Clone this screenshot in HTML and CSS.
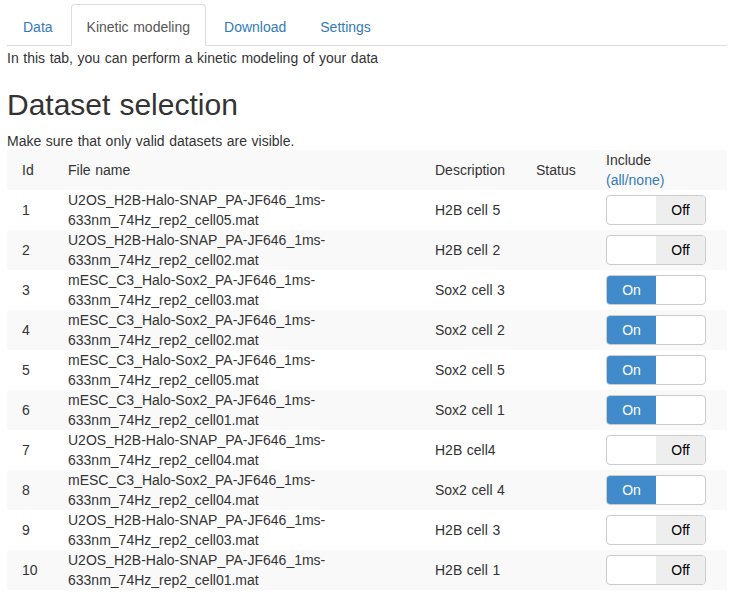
FILE: index.html
```html
<!DOCTYPE html>
<html>
<head>
<meta charset="utf-8">
<link rel="stylesheet" href="styles.css">
</head>
<body>
<div class="page">
  <ul class="tabs">
    <li><a href="#">Data</a></li>
    <li class="active"><a href="#">Kinetic modeling</a></li>
    <li><a href="#">Download</a></li>
    <li><a href="#">Settings</a></li>
  </ul>
  <div class="intro">In this tab, you can perform a kinetic modeling of your data</div>
  <h2 class="title">Dataset selection</h2>
  <div class="note">Make sure that only valid datasets are visible.</div>
  <table class="grid">
    <colgroup>
      <col class="c-id"><col class="c-file"><col class="c-desc"><col class="c-status"><col class="c-inc">
    </colgroup>
    <thead>
      <tr><th>Id</th><th>File name</th><th>Description</th><th>Status</th><th>Include<br><a href="#" class="link">(all/none)</a></th></tr>
    </thead>
    <tbody>
      <tr><td>1</td><td>U2OS_H2B-Halo-SNAP_PA-JF646_1ms-<br>633nm_74Hz_rep2_cell05.mat</td><td>H2B cell 5</td><td></td><td><div class="sw off"><span class="on-part"></span><span class="off-part">Off</span></div></td></tr>
      <tr><td>2</td><td>U2OS_H2B-Halo-SNAP_PA-JF646_1ms-<br>633nm_74Hz_rep2_cell02.mat</td><td>H2B cell 2</td><td></td><td><div class="sw off"><span class="on-part"></span><span class="off-part">Off</span></div></td></tr>
      <tr><td>3</td><td>mESC_C3_Halo-Sox2_PA-JF646_1ms-<br>633nm_74Hz_rep2_cell03.mat</td><td>Sox2 cell 3</td><td></td><td><div class="sw on"><span class="on-part">On</span><span class="off-part"></span></div></td></tr>
      <tr><td>4</td><td>mESC_C3_Halo-Sox2_PA-JF646_1ms-<br>633nm_74Hz_rep2_cell02.mat</td><td>Sox2 cell 2</td><td></td><td><div class="sw on"><span class="on-part">On</span><span class="off-part"></span></div></td></tr>
      <tr><td>5</td><td>mESC_C3_Halo-Sox2_PA-JF646_1ms-<br>633nm_74Hz_rep2_cell05.mat</td><td>Sox2 cell 5</td><td></td><td><div class="sw on"><span class="on-part">On</span><span class="off-part"></span></div></td></tr>
      <tr><td>6</td><td>mESC_C3_Halo-Sox2_PA-JF646_1ms-<br>633nm_74Hz_rep2_cell01.mat</td><td>Sox2 cell 1</td><td></td><td><div class="sw on"><span class="on-part">On</span><span class="off-part"></span></div></td></tr>
      <tr><td>7</td><td>U2OS_H2B-Halo-SNAP_PA-JF646_1ms-<br>633nm_74Hz_rep2_cell04.mat</td><td>H2B cell4</td><td></td><td><div class="sw off"><span class="on-part"></span><span class="off-part">Off</span></div></td></tr>
      <tr><td>8</td><td>mESC_C3_Halo-Sox2_PA-JF646_1ms-<br>633nm_74Hz_rep2_cell04.mat</td><td>Sox2 cell 4</td><td></td><td><div class="sw on"><span class="on-part">On</span><span class="off-part"></span></div></td></tr>
      <tr><td>9</td><td>U2OS_H2B-Halo-SNAP_PA-JF646_1ms-<br>633nm_74Hz_rep2_cell03.mat</td><td>H2B cell 3</td><td></td><td><div class="sw off"><span class="on-part"></span><span class="off-part">Off</span></div></td></tr>
      <tr><td>10</td><td>U2OS_H2B-Halo-SNAP_PA-JF646_1ms-<br>633nm_74Hz_rep2_cell01.mat</td><td>H2B cell 1</td><td></td><td><div class="sw off"><span class="on-part"></span><span class="off-part">Off</span></div></td></tr>
    </tbody>
  </table>
</div>
</body>
</html>
```
FILE: styles.css
```css
html, body {
  margin: 0;
  padding: 0;
  background: #fff;
}
body {
  font-family: "Liberation Sans", Arial, sans-serif;
  font-size: 14px;
  line-height: 20px;
  color: #333;
  word-spacing: 0.7px;
}
.page {
  padding: 4px 2px 0 7px;
}
.tabs {
  list-style: none;
  margin: 0;
  padding: 0;
  display: flex;
  border-bottom: 1px solid #ddd;
}
.tabs li {
  margin-right: 2px;
  margin-bottom: -1px;
}
.tabs a {
  display: block;
  padding: 12px 15px 8px 15px;
  line-height: 20px;
  border: 1px solid transparent;
  border-radius: 4px 4px 0 0;
  color: #337ab7;
  text-decoration: none;
}
.tabs li.active a {
  color: #555;
  background: #fff;
  border-color: #ddd #ddd transparent #ddd;
}
.intro {
  padding-top: 2px;
  height: 20px;
}
.title {
  font-size: 30px;
  font-weight: 500;
  line-height: 33px;
  margin: 20px 0 9px 0;
  color: #333;
}
.note {
  padding-top: 1px;
  height: 19px;
  line-height: 20px;
}
.grid {
  width: 720px;
  border-collapse: collapse;
  table-layout: fixed;
}
.c-id { width: 46px; }
.c-file { width: 367px; }
.c-desc { width: 101px; }
.c-status { width: 70px; }
.c-inc { width: 136px; }
.grid th, .grid td {
  padding: 0 0 0 15px;
  height: 40px;
  text-align: left;
  vertical-align: middle;
  font-weight: normal;
  white-space: nowrap;
}
.grid thead tr {
  background: #f9f9f9;
}
.grid tbody tr:nth-child(even) {
  background: #f9f9f9;
}
.link {
  color: #337ab7;
  text-decoration: none;
}
.sw {
  width: 98px;
  height: 28px;
  border: 1px solid #ccc;
  border-radius: 4px;
  display: flex;
  overflow: hidden;
  background: #fff;
}
.sw span {
  width: 49px;
  display: flex;
  align-items: center;
  justify-content: center;
  font-size: 14px;
}
.sw.off .off-part {
  background: #eee;
  color: #000;
}
.sw.on .on-part {
  background: #428bca;
  color: #fff;
}
```
